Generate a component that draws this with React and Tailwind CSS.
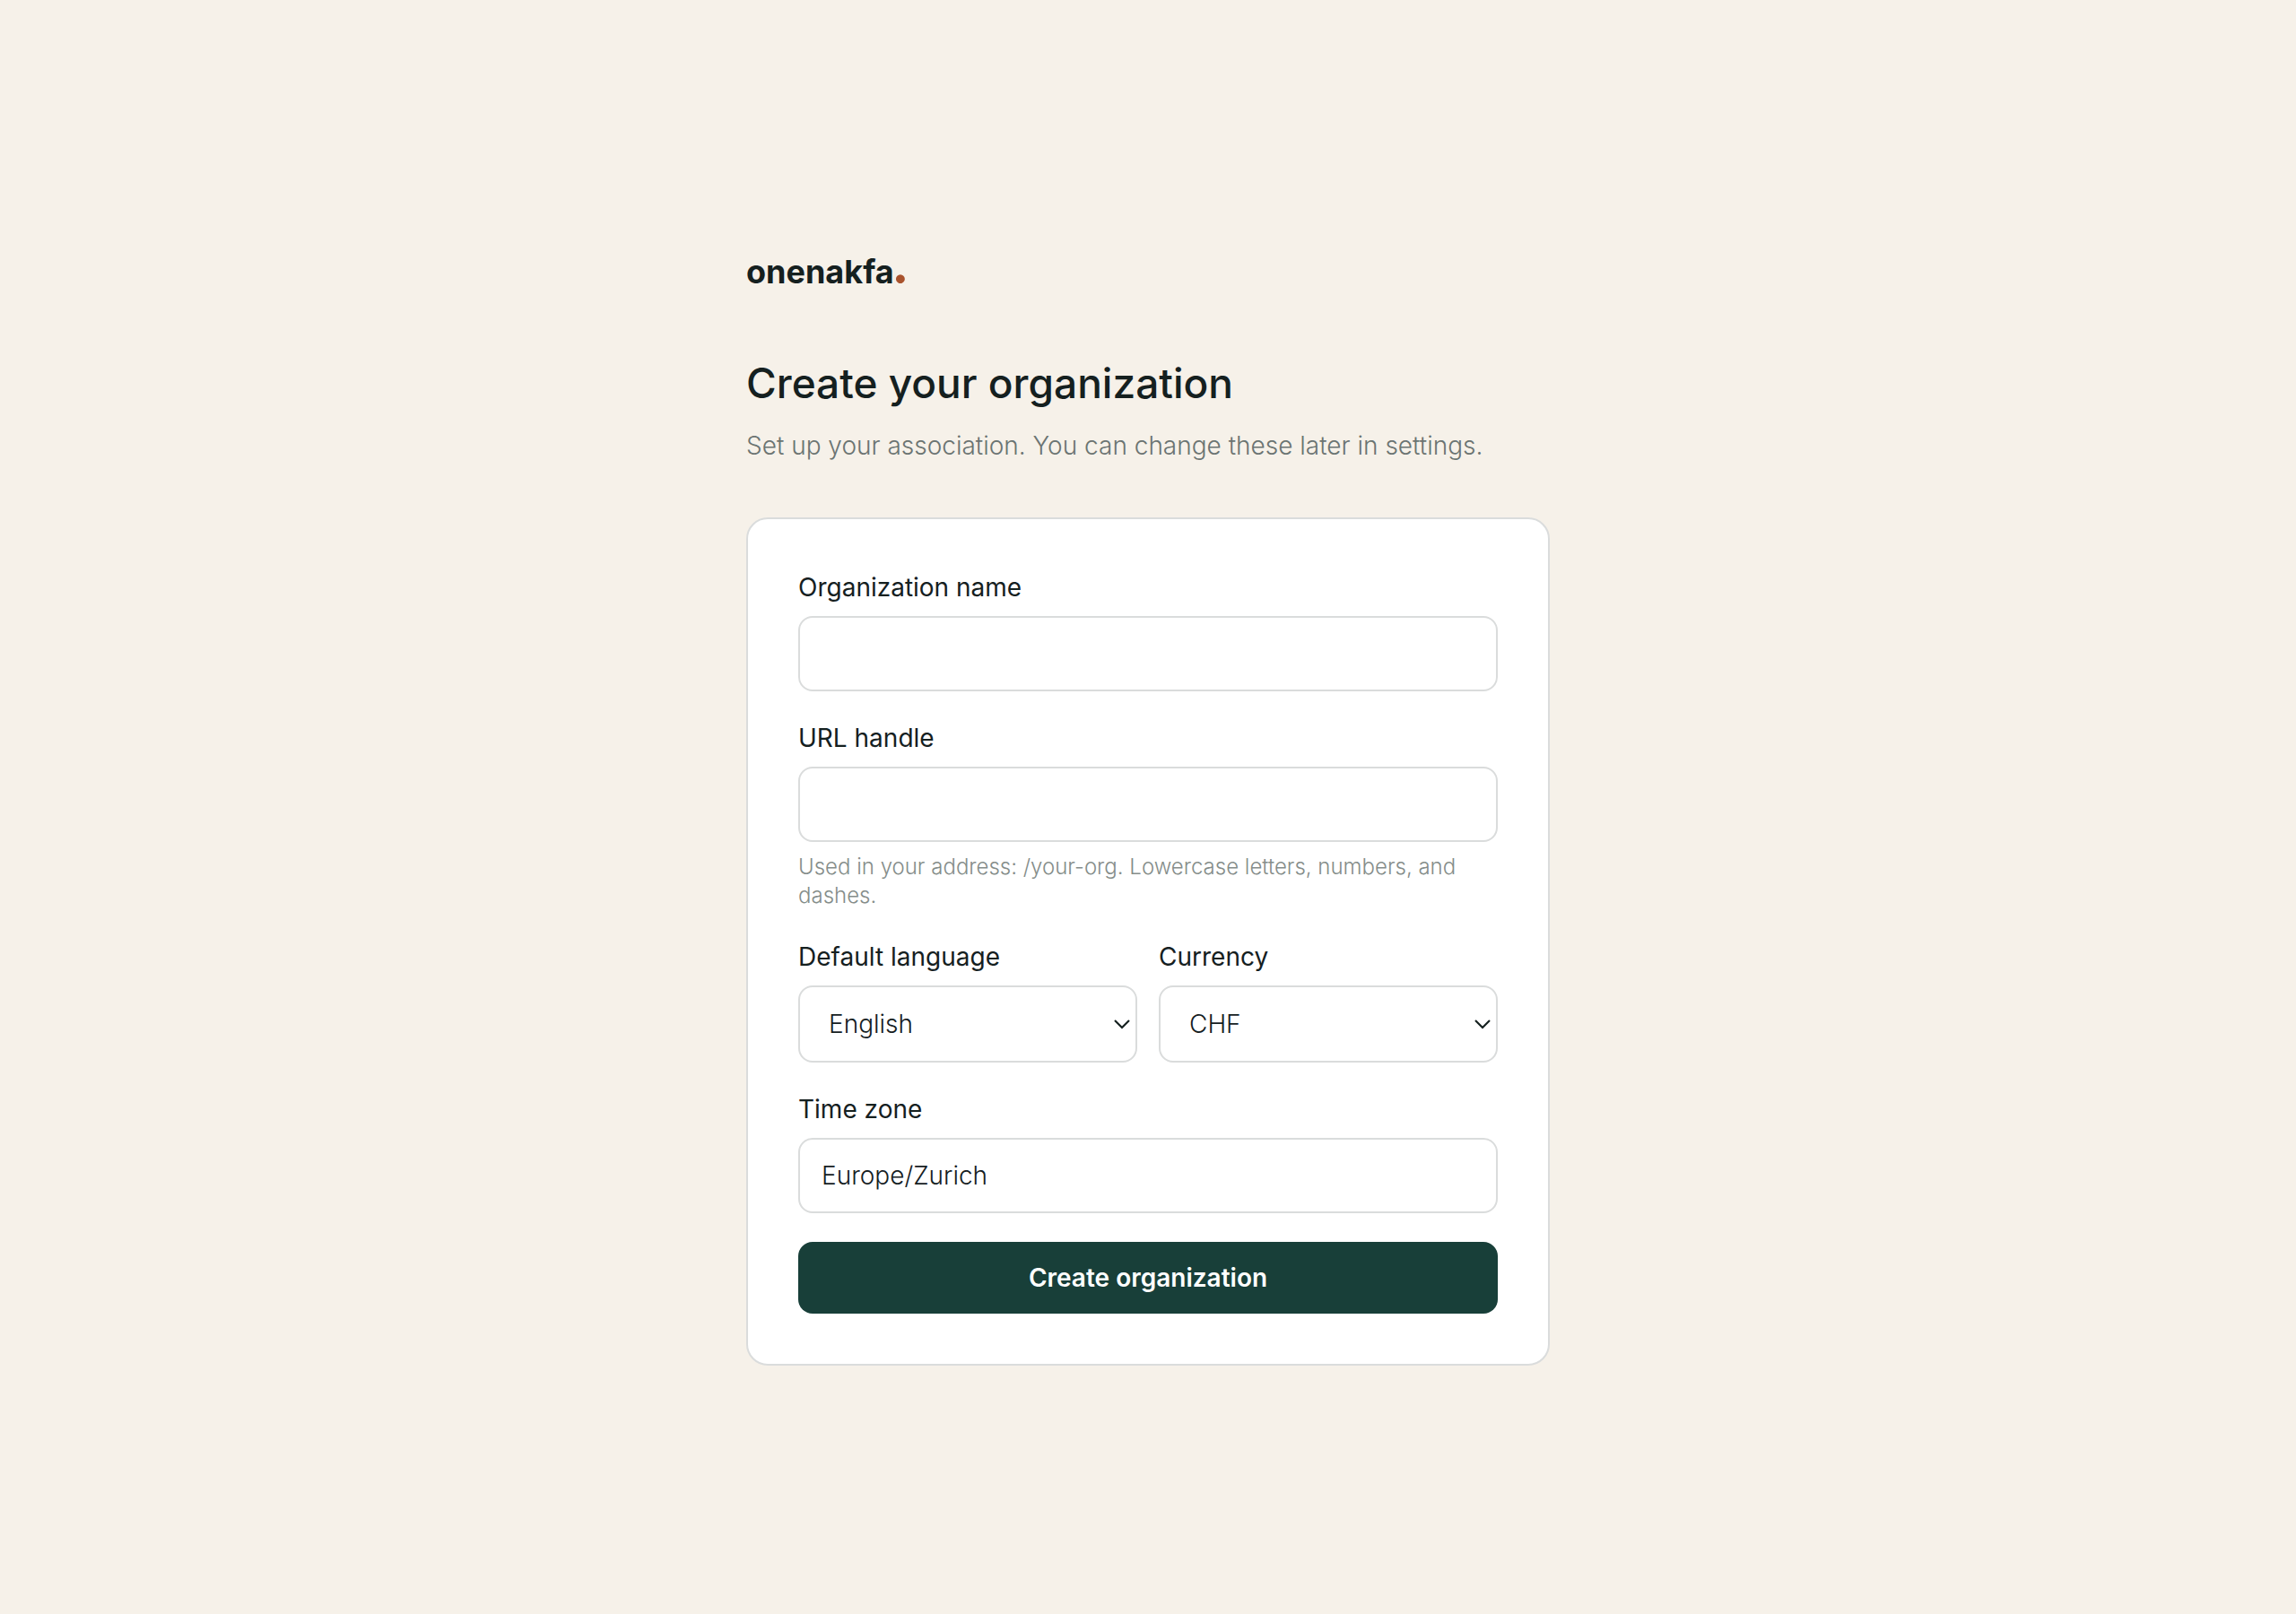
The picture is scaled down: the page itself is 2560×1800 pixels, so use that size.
import { useState } from 'react';

const LANGUAGES = ['English', 'Deutsch', 'Français', 'Italiano'];
const CURRENCIES = ['CHF', 'EUR', 'USD', 'GBP'];

const CONTROL = 'w-full rounded-[16px] border-2 border-[#dadcdc] bg-white text-[28px] font-light text-[#15201f] outline-none focus:border-[#183f39]';

function Field({ id, label, hint, children }) {
  return (
    <div className="flex flex-col gap-3">
      <label htmlFor={id} className="text-[28px] leading-10 text-[#15201f]">{label}</label>
      {children}
      {hint && <p className="text-2xl leading-8 font-light text-[#858d8a]">{hint}</p>}
    </div>
  );
}

function TextInput(props) {
  return <input type="text" className={`${CONTROL} h-[84px] px-6`} {...props} />;
}

function Select({ options, ...props }) {
  return (
    <div className="relative">
      <select className={`${CONTROL} block h-[86px] appearance-none pl-8 pr-10`} {...props}>
        {options.map((o) => (
          <option key={o}>{o}</option>
        ))}
      </select>
      {/* Chevron */}
      <svg
        className="pointer-events-none absolute inset-y-0 right-2 my-auto h-3 w-[18px] text-[#15201f]"
        viewBox="0 0 18 12"
        fill="none"
        stroke="currentColor"
        strokeWidth={2.2}
      >
        <path d="M1 2l8 8 8-8" />
      </svg>
    </div>
  );
}

export default function App() {
  const [form, setForm] = useState({
    name: '',
    handle: '',
    language: 'English',
    currency: 'CHF',
    timeZone: 'Europe/Zurich',
  });

  const bind = (key) => ({
    id: key,
    name: key,
    value: form[key],
    onChange: (e) => setForm({ ...form, [key]: e.target.value }),
  });

  return (
    <main className="flex min-h-screen items-center justify-center bg-[#f6f1e9] font-['Inter',sans-serif] text-[#15201f]">
      <div className="w-full max-w-4xl">
        <p className="flex h-[52px] items-baseline text-4xl leading-8 font-bold">
          onenakfa
          <span className="font-['Lato',sans-serif] text-6xl leading-8 font-black text-[#a9532d]">.</span>
        </p>

        <h1 className="mt-16 text-[46px] leading-[68px] font-medium">Create your organization</h1>
        <p className="mt-4 text-[28px] leading-10 font-light text-[#6b7472]">
          Set up your association. You can change these later in settings.
        </p>

        <form
          onSubmit={(e) => e.preventDefault()}
          className="mt-15 flex flex-col gap-8 rounded-3xl border-2 border-[#dadcdc] bg-white p-14"
        >
          <Field id="name" label="Organization name">
            <TextInput {...bind('name')} />
          </Field>

          <Field
            id="handle"
            label="URL handle"
            hint="Used in your address: /your-org. Lowercase letters, numbers, and dashes."
          >
            <TextInput {...bind('handle')} />
          </Field>

          <div className="grid grid-cols-2 gap-6">
            <Field id="language" label="Default language">
              <Select options={LANGUAGES} {...bind('language')} />
            </Field>
            <Field id="currency" label="Currency">
              <Select options={CURRENCIES} {...bind('currency')} />
            </Field>
          </div>

          <Field id="timeZone" label="Time zone">
            <TextInput {...bind('timeZone')} />
          </Field>

          <button
            type="submit"
            className="h-20 rounded-[16px] bg-[#183f39] text-[28px] font-semibold text-white hover:bg-[#12322d]"
          >
            Create organization
          </button>
        </form>
      </div>
    </main>
  );
}
